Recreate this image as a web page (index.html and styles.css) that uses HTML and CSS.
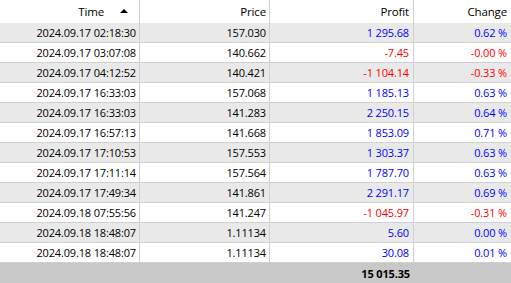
FILE: index.html
```html
<!DOCTYPE html>
<html lang="en">

<head>
    <meta charset="UTF-8">
    <title>History</title>
    <link rel="stylesheet" href="styles.css">
</head>

<body>
    <div class="grid">
        <div class="row head">
            <div class="cell c-time">Time <span class="sort"></span></div>
            <div class="cell c-price">Price</div>
            <div class="cell c-profit">Profit</div>
            <div class="cell c-change">Change</div>
        </div>

        <div class="row">
            <div class="cell c-time">2024.09.17 02:18:30</div>
            <div class="cell c-price">157.030</div>
            <div class="cell c-profit up">1 295.68</div>
            <div class="cell c-change up">0.62 %</div>
        </div>
        <div class="row">
            <div class="cell c-time">2024.09.17 03:07:08</div>
            <div class="cell c-price">140.662</div>
            <div class="cell c-profit down">-7.45</div>
            <div class="cell c-change down">-0.00 %</div>
        </div>
        <div class="row">
            <div class="cell c-time">2024.09.17 04:12:52</div>
            <div class="cell c-price">140.421</div>
            <div class="cell c-profit down">-1 104.14</div>
            <div class="cell c-change down">-0.33 %</div>
        </div>
        <div class="row">
            <div class="cell c-time">2024.09.17 16:33:03</div>
            <div class="cell c-price">157.068</div>
            <div class="cell c-profit up">1 185.13</div>
            <div class="cell c-change up">0.63 %</div>
        </div>
        <div class="row">
            <div class="cell c-time">2024.09.17 16:33:03</div>
            <div class="cell c-price">141.283</div>
            <div class="cell c-profit up">2 250.15</div>
            <div class="cell c-change up">0.64 %</div>
        </div>
        <div class="row">
            <div class="cell c-time">2024.09.17 16:57:13</div>
            <div class="cell c-price">141.668</div>
            <div class="cell c-profit up">1 853.09</div>
            <div class="cell c-change up">0.71 %</div>
        </div>
        <div class="row">
            <div class="cell c-time">2024.09.17 17:10:53</div>
            <div class="cell c-price">157.553</div>
            <div class="cell c-profit up">1 303.37</div>
            <div class="cell c-change up">0.63 %</div>
        </div>
        <div class="row">
            <div class="cell c-time">2024.09.17 17:11:14</div>
            <div class="cell c-price">157.564</div>
            <div class="cell c-profit up">1 787.70</div>
            <div class="cell c-change up">0.63 %</div>
        </div>
        <div class="row">
            <div class="cell c-time">2024.09.17 17:49:34</div>
            <div class="cell c-price">141.861</div>
            <div class="cell c-profit up">2 291.17</div>
            <div class="cell c-change up">0.69 %</div>
        </div>
        <div class="row">
            <div class="cell c-time">2024.09.18 07:55:56</div>
            <div class="cell c-price">141.247</div>
            <div class="cell c-profit down">-1 045.97</div>
            <div class="cell c-change down">-0.31 %</div>
        </div>
        <div class="row">
            <div class="cell c-time">2024.09.18 18:48:07</div>
            <div class="cell c-price">1.11134</div>
            <div class="cell c-profit up">5.60</div>
            <div class="cell c-change up">0.00 %</div>
        </div>
        <div class="row">
            <div class="cell c-time">2024.09.18 18:48:07</div>
            <div class="cell c-price">1.11134</div>
            <div class="cell c-profit up">30.08</div>
            <div class="cell c-change up">0.01 %</div>
        </div>

        <div class="row total">
            <div class="cell c-time"></div>
            <div class="cell c-price"></div>
            <div class="cell c-profit">15 015.35</div>
            <div class="cell c-change"></div>
        </div>
    </div>
</body>

</html>
```

FILE: styles.css
```css
* {
    margin: 0;
    padding: 0;
    box-sizing: border-box;
}

body {
    font-family: 'Open Sans', 'Noto Sans', Arial, sans-serif;
    font-size: 11px;
    color: #000000;
    background: #ffffff;
}

.grid {
    width: 511px;
}

.row {
    display: flex;
    height: 20px;
    border-bottom: 1px solid #d0d0d0;
}

.row:nth-child(even) {
    background: #e9e9e9;
}

.cell {
    display: flex;
    align-items: center;
    justify-content: flex-end;
    padding-right: 3px;
    border-right: 1px solid #d0d0d0;
    white-space: nowrap;
    letter-spacing: -0.15px;
}

.c-time {
    width: 140px;
}

.c-price {
    width: 130px;
}

.c-profit {
    width: 144px;
    padding-right: 4px;
}

.c-change {
    flex: 1;
    border-right: none;
    padding-right: 4px;
}

.head {
    height: 23px;
    background: #ffffff;
    border-bottom: none;
}

.head .cell {
    font-size: 11.5px;
    color: #000000;
}

.head .c-time {
    padding-right: 35px;
    position: relative;
}

.sort {
    position: absolute;
    right: 11px;
    top: 9px;
    width: 0;
    height: 0;
    border-left: 4px solid transparent;
    border-right: 4px solid transparent;
    border-bottom: 4px solid #000000;
}

.up {
    color: #0000ff;
}

.down {
    color: #ff0000;
}

.total {
    background: #c8c8c8 !important;
    border-bottom: none;
    height: 20px;
    font-weight: bold;
}

.total .cell {
    border-right: none;
}
```
